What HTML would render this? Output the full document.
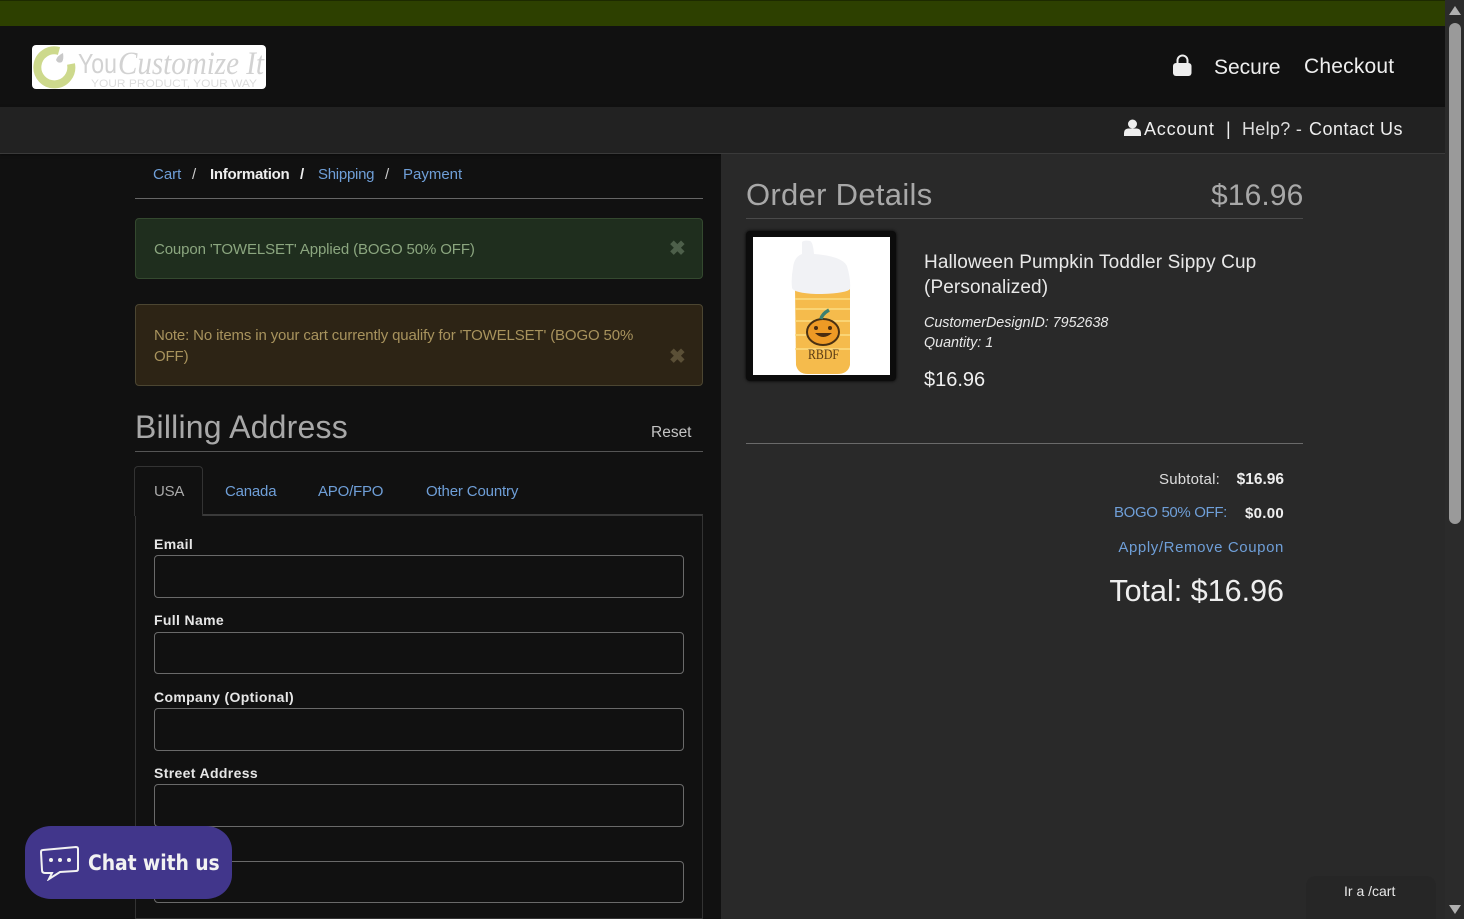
<!DOCTYPE html>
<html><head><meta charset="utf-8"><title>Checkout</title>
<style>
html,body{margin:0;padding:0;width:1464px;height:919px;overflow:hidden;background:#111;font-family:"Liberation Sans",sans-serif;color:#eee}
.a{position:absolute;white-space:nowrap;line-height:1}
.l{color:#6f9fd8}
.box{position:absolute;box-sizing:border-box}
.inp{position:absolute;left:154px;width:530px;box-sizing:border-box;border:1px solid #6a6a6a;border-radius:4px;background:#111}
.lab{position:absolute;left:154px;font-weight:bold;font-size:14px;letter-spacing:.35px;color:#e6e6e6;line-height:1;white-space:nowrap}
</style></head><body>
<div class="box" style="left:0;top:0;width:1445px;height:26px;background:#2d4000;border-top:1px solid #1d2a00"></div>
<div class="box" style="left:0;top:26px;width:1445px;height:81px;background:#111"></div>
<div class="box" style="left:0;top:107px;width:1445px;height:47px;background:#222;border-bottom:1px solid #3a3a3a;box-shadow:0 1px 3px rgba(0,0,0,.4)"></div>
<div class="box" style="left:721px;top:154px;width:724px;height:765px;background:#292929"></div>

<div class="box" style="left:32px;top:45px;width:234px;height:44px;background:#fff;border-radius:4px;overflow:hidden">
<svg width="234" height="44" style="position:absolute;left:0;top:0"><path d="M27 6 A17 17 0 1 0 39 19" fill="none" stroke="#cdd98c" stroke-width="8"/><path d="M24 15 q1-4 7-7 q1 6-1 9 q-4 2-6-2z" fill="#c9c9c9"/>
<text x="46" y="28" font-family="Liberation Sans" font-size="28" fill="#d2d2d2" textLength="39" lengthAdjust="spacingAndGlyphs">You</text>
<text x="86" y="29" font-family="Liberation Serif" font-style="italic" font-size="33" fill="#d2d2d2" textLength="146" lengthAdjust="spacingAndGlyphs">Customize It</text>
<text x="59" y="42" font-family="Liberation Sans" font-size="11" fill="#dcdcdc" textLength="166" lengthAdjust="spacingAndGlyphs">YOUR PRODUCT, YOUR WAY</text></svg></div>

<svg class="box" style="left:1173px;top:54px" width="19" height="23" viewBox="0 0 19 23"><path d="M4.500 10V6.500a5 5 0 0 1 10 0V10" fill="none" stroke="#eee" stroke-width="2"/><rect x="0" y="9" width="18.500" height="13" rx="3" fill="#eee"/></svg>
<div class="a" style="left:1214px;top:57px;font-size:21px;color:#eee;letter-spacing:0">Secure</div>
<div class="a" style="left:1304px;top:56px;font-size:21px;color:#eee;letter-spacing:.2px">Checkout</div>

<svg class="box" style="left:1124px;top:119px" width="17" height="18" viewBox="0 0 17 18"><circle cx="8.500" cy="5" r="4.500" fill="#eee"/><path d="M0 17v-3q0-4 4-4.500h9q4 .5 4 4.500v3z" fill="#eee"/></svg>
<div class="a" style="left:1144px;top:120px;font-size:18px;color:#eee;letter-spacing:.8px">Account</div>
<div class="a" style="left:1226px;top:120px;font-size:18px;color:#eee">|</div>
<div class="a" style="left:1242px;top:120px;font-size:18px;color:#ddd;letter-spacing:.3px">Help? -</div>
<div class="a" style="left:1309px;top:120px;font-size:18px;color:#eee;letter-spacing:.5px">Contact Us</div>

<div class="a l" style="left:153px;top:167px;font-size:15px">Cart</div>
<div class="a" style="left:192px;top:167px;font-size:15px;color:#ccc">/</div>
<div class="a" style="left:210px;top:167px;font-size:15px;font-weight:bold;letter-spacing:-.28px">Information</div>
<div class="a" style="left:300px;top:167px;font-size:15px;font-weight:bold">/</div>
<div class="a l" style="left:318px;top:167px;font-size:15px;letter-spacing:-.27px">Shipping</div>
<div class="a" style="left:385px;top:167px;font-size:15px;color:#ccc">/</div>
<div class="a l" style="left:403px;top:167px;font-size:15px">Payment</div>
<div class="box" style="left:135px;top:198px;width:568px;height:1px;background:#666"></div>

<div class="box" style="left:135px;top:218px;width:568px;height:61px;background:#1f2e1e;border:1px solid #34492f;border-radius:4px"></div>
<div class="a" style="left:154px;top:242px;font-size:15px;color:#8ba67f;letter-spacing:-.12px">Coupon 'TOWELSET' Applied (BOGO 50% OFF)</div>
<div class="a" style="left:669px;top:239px;font-size:20px;font-weight:bold;color:#4d5f4a">✖</div>

<div class="box" style="left:135px;top:304px;width:568px;height:82px;background:#2d2415;border:1px solid #4c4632;border-radius:4px"></div>
<div class="a" style="left:154px;top:325px;font-size:15px;color:#a8935d;letter-spacing:-.14px;line-height:21px">Note: No items in your cart currently qualify for 'TOWELSET' (BOGO 50%<br>OFF)</div>
<div class="a" style="left:669px;top:347px;font-size:20px;font-weight:bold;color:#5a4f36">✖</div>

<div class="a" style="left:135px;top:411px;font-size:32px;color:#a8a8a8;letter-spacing:.2px">Billing Address</div>
<div class="a" style="left:651px;top:425px;font-size:15.500px;color:#c4c4c4">Reset</div>
<div class="box" style="left:135px;top:451px;width:568px;height:1px;background:#555"></div>

<div class="box" style="left:135px;top:514px;width:568px;height:405px;border:1px solid #333;border-top:2px solid #3a3a3a"></div>
<div class="box" style="left:134px;top:466px;width:69px;height:50px;background:#111;border:1px solid #333;border-bottom:none;border-radius:4px 4px 0 0"></div>
<div class="a" style="left:154px;top:484px;font-size:15px;letter-spacing:-.2px;color:#aaa">USA</div>
<div class="a l" style="left:225px;top:484px;font-size:15px;letter-spacing:-.2px">Canada</div>
<div class="a l" style="left:318px;top:484px;font-size:15px;letter-spacing:-.2px">APO/FPO</div>
<div class="a l" style="left:426px;top:484px;font-size:15px;letter-spacing:-.15px">Other Country</div>

<div class="lab" style="top:537px">Email</div><div class="inp" style="top:555px;height:43px"></div>
<div class="lab" style="top:613px">Full Name</div><div class="inp" style="top:632px;height:42px"></div>
<div class="lab" style="top:690px">Company (Optional)</div><div class="inp" style="top:708px;height:43px"></div>
<div class="lab" style="top:766px">Street Address</div><div class="inp" style="top:784px;height:43px"></div>
<div class="inp" style="top:861px;height:42px"></div>

<div class="box" style="left:25px;top:826px;width:207px;height:73px;background:#41368b;border-radius:26px/24px"></div>
<svg class="box" style="left:40px;top:845px" width="40" height="36" viewBox="0 0 40 36"><path d="M3 5 L36 2 Q38 2 38 4 L38 24 Q38 26 36 26 L20 27 L9 34 L12 28 L5 28 Q2 28 2 25 L1 7 Q1 5 3 5Z" fill="none" stroke="#f2f2f2" stroke-width="2"/><circle cx="11" cy="15" r="2" fill="#f2f2f2"/><circle cx="20" cy="15" r="2" fill="#f2f2f2"/><circle cx="29" cy="15" r="2" fill="#f2f2f2"/></svg>
<div class="a" style="left:88px;top:853px;font-size:21px;font-weight:bold;color:#f2f2f2;font-family:'DejaVu Sans',sans-serif;letter-spacing:-.1px;transform-origin:left;transform:scaleX(.895)">Chat with us</div>

<div class="a" style="left:746px;top:179px;font-size:31px;color:#a8a8a8;letter-spacing:.3px">Order Details</div>
<div class="a" style="left:1211px;top:181px;font-size:30px;color:#a8a8a8;letter-spacing:.1px">$16.96</div>
<div class="box" style="left:746px;top:218px;width:557px;height:1px;background:#4a4a4a"></div>

<div class="box" style="left:746px;top:231px;width:150px;height:150px;background:#0c0c0c;border-radius:4px;box-shadow:0 0 3px #000"></div>
<div class="box" style="left:753px;top:237px;width:137px;height:138px;background:#fff"></div>
<svg class="box" style="left:753px;top:237px" width="137" height="138" viewBox="0 0 137 138">
<path d="M42 50 H97 L97 128 Q95 137 84 137 H55 Q45 137 43 128Z" fill="#f5bb4c"/>
<g stroke="#fcdc82" stroke-width="1.500"><path d="M42 62h55M42 72h55M42 84h55M42 98h55M42 112h55"/></g>
<path d="M49 5 q2 -2 8 -1 q3 1 4 13 q28 2 33 12 q4 14 3 23 q-3 4-28 5 h-6 q-22-1-24-6 q-1-10 1-20 q1-11 9-14z" fill="#f1f2f5"/>
<ellipse cx="70" cy="95" rx="16" ry="13" fill="#ee9a25" stroke="#4a3112" stroke-width="2"/>
<path d="M68 82 q1-5 8-9" stroke="#3c7f70" stroke-width="3.500" fill="none"/>
<path d="M62 96 q8 8 17 0z" fill="#4a2c10"/><circle cx="63" cy="91" r="2" fill="#4a2c10"/><circle cx="77" cy="91" r="2" fill="#4a2c10"/>
<text x="55" y="122" font-family="Liberation Serif" font-size="15" fill="#5a3a14" textLength="31" lengthAdjust="spacingAndGlyphs">RBDF</text>
</svg>

<div class="a" style="left:924px;top:250px;font-size:19px;color:#e8e8e8;line-height:25px;letter-spacing:.12px">Halloween Pumpkin Toddler Sippy Cup<br>(Personalized)</div>
<div class="a" style="left:924px;top:313px;font-size:14.300px;font-style:italic;color:#e8e8e8;line-height:20px">CustomerDesignID: 7952638<br>Quantity: 1</div>
<div class="a" style="left:924px;top:370px;font-size:20px;color:#f0f0f0">$16.96</div>

<div class="box" style="left:746px;top:443px;width:557px;height:1px;background:#6a6a6a"></div>
<div class="a" style="right:244px;top:472px;font-size:15px;letter-spacing:.2px;color:#ddd">Subtotal:</div>
<div class="a" style="right:180px;top:472px;font-size:15.500px;font-weight:bold;color:#eee">$16.96</div>
<div class="a" style="right:237px;top:505px;font-size:15px;letter-spacing:-.35px;color:#6f9fd8">BOGO 50% OFF:</div>
<div class="a" style="right:180px;top:506px;font-size:15px;font-weight:bold;color:#eee;letter-spacing:.3px">$0.00</div>
<div class="a l" style="right:180px;top:540px;font-size:15px;letter-spacing:.6px">Apply/Remove Coupon</div>
<div class="a" style="right:180px;top:576px;font-size:30.500px;color:#eee">Total: $16.96</div>

<div class="box" style="left:1306px;top:876px;width:130px;height:43px;background:#262626;border-radius:10px 10px 0 0"></div>
<div class="a" style="left:1344px;top:884px;font-size:14px;color:#e8e8e8">Ir a /cart</div>

<div class="box" style="left:1445px;top:0;width:19px;height:919px;background:#2b2b2b"></div>
<div class="box" style="left:1449px;top:23px;width:12px;height:501px;background:#9a9a9a;border-radius:6px"></div>
<svg class="box" style="left:1448px;top:5px" width="14" height="11"><path d="M7 1 L13 10 H1Z" fill="#b0b0b0"/></svg>
<svg class="box" style="left:1448px;top:904px" width="14" height="11"><path d="M1 1 H13 L7 10Z" fill="#b0b0b0"/></svg>
</body></html>
